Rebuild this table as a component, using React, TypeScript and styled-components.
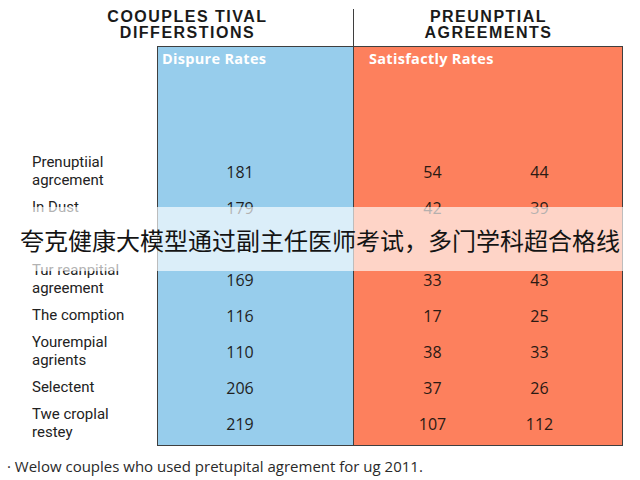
import React from "react";
import styled, { createGlobalStyle } from "styled-components";

const GlobalStyle = createGlobalStyle`
  html, body {
    margin: 0;
    padding: 0;
    background: #ffffff;
  }
  body {
    font-family: "Open Sans", "Liberation Sans", sans-serif;
    color: #222222;
  }
`;

const Page = styled.div`
  position: relative;
  width: 640px;
  height: 480px;
  overflow: hidden;
  background: #ffffff;
`;

const TitleRow = styled.div`
  display: grid;
  grid-template-columns: 353px 270px;
  height: 46px;
`;

const Title = styled.div<{ $divider?: boolean }>`
  font-family: "Liberation Sans", Arial, sans-serif;
  font-weight: 700;
  font-size: 16px;
  line-height: 16px;
  letter-spacing: 1.5px;
  color: #1a1a1a;
  text-align: center;
  margin-top: ${(p) => (p.$divider ? "9px" : "0")};
  padding-top: ${(p) => (p.$divider ? "0" : "9px")};
  padding-left: ${(p) => (p.$divider ? "0" : "22px")};
  border-left: ${(p) => (p.$divider ? "1.5px solid #3f3f3f" : "none")};
`;

const Table = styled.div`
  display: grid;
  grid-template-columns: 157px 196px 270px;
  height: 400px;
`;

const LabelColumn = styled.div`
  display: flex;
  flex-direction: column;
  padding-top: 108px;
`;

const Panel = styled.div<{ $bg: string; $right?: boolean }>`
  display: flex;
  flex-direction: column;
  background: ${(p) => p.$bg};
  border-top: 1.5px solid #3f3f3f;
  border-bottom: 1.5px solid #3f3f3f;
  border-left: 1.5px solid #3f3f3f;
  border-right: ${(p) => (p.$right ? "1.5px solid #3f3f3f" : "none")};
  box-sizing: border-box;
`;

const PanelHead = styled.div<{ $indent: number }>`
  height: 106.5px;
  box-sizing: border-box;
  padding: 4px 0 0 ${(p) => p.$indent}px;
  font-family: "Open Sans", "Liberation Sans", sans-serif;
  font-weight: 700;
  font-size: 14.5px;
  line-height: 16px;
  letter-spacing: 0.3px;
  color: #ffffff;
`;

const Row = styled.div`
  height: 36px;
  display: flex;
  align-items: center;
`;

const Label = styled.div`
  padding-left: 32px;
  font-family: Roboto, "Open Sans", sans-serif;
  font-size: 15px;
  line-height: 17.8px;
  color: #222222;
`;

const BlueCell = styled.div`
  width: 164px;
  text-align: center;
  font-size: 16px;
  color: #1f1f1f;
`;

const OrangeRow = styled(Row)`
  padding-left: 25px;
`;

const OrangeCell = styled.div`
  width: 107px;
  text-align: center;
  font-size: 16px;
  color: #2a1a14;
`;

const Footnote = styled.div`
  padding: 12px 0 0 7px;
  font-size: 15px;
  line-height: 16px;
  color: #2a2a2a;
`;

const Band = styled.div`
  position: absolute;
  left: 0;
  right: 0;
  top: 207px;
  height: 64px;
  display: flex;
  align-items: center;
  justify-content: center;
  background: rgba(255, 255, 255, 0.66);
  font-family: "Noto Sans CJK SC", "Noto Sans", sans-serif;
  font-size: 24px;
  color: #141414;
  white-space: nowrap;
`;

type RowData = { label: string[]; blue: string; a: string; b: string };

const rows: RowData[] = [
  { label: ["Prenuptiial", "agrcement"], blue: "181", a: "54", b: "44" },
  { label: ["In Dust"], blue: "179", a: "42", b: "39" },
  { label: [""], blue: "", a: "", b: "" },
  { label: ["Tur reanpitial", "agreement"], blue: "169", a: "33", b: "43" },
  { label: ["The comption"], blue: "116", a: "17", b: "25" },
  { label: ["Yourempial", "agrients"], blue: "110", a: "38", b: "33" },
  { label: ["Selectent"], blue: "206", a: "37", b: "26" },
  { label: ["Twe croplal", "restey"], blue: "219", a: "107", b: "112" },
];

export default function App() {
  return (
    <Page>
      <GlobalStyle />
      <TitleRow>
        <Title>
          COOUPLES TIVAL
          <br />
          DIFFERSTIONS
        </Title>
        <Title $divider>
          PREUNPTIAL
          <br />
          AGREEMENTS
        </Title>
      </TitleRow>
      <Table>
        <LabelColumn>
          {rows.map((r, i) => (
            <Row key={i}>
              <Label>
                {r.label.map((l, j) => (
                  <div key={j}>{l}</div>
                ))}
              </Label>
            </Row>
          ))}
        </LabelColumn>
        <Panel $bg="#97cdec">
          <PanelHead $indent={4}>Dispure Rates</PanelHead>
          {rows.map((r, i) => (
            <Row key={i}>
              <BlueCell>{r.blue}</BlueCell>
            </Row>
          ))}
        </Panel>
        <Panel $bg="#fd805d" $right>
          <PanelHead $indent={15}>Satisfactly Rates</PanelHead>
          {rows.map((r, i) => (
            <OrangeRow key={i}>
              <OrangeCell>{r.a}</OrangeCell>
              <OrangeCell>{r.b}</OrangeCell>
            </OrangeRow>
          ))}
        </Panel>
      </Table>
      <Footnote>· Welow couples who used pretupital agrement for ug 2011.</Footnote>
      <Band>夸克健康大模型通过副主任医师考试，多门学科超合格线</Band>
    </Page>
  );
}
